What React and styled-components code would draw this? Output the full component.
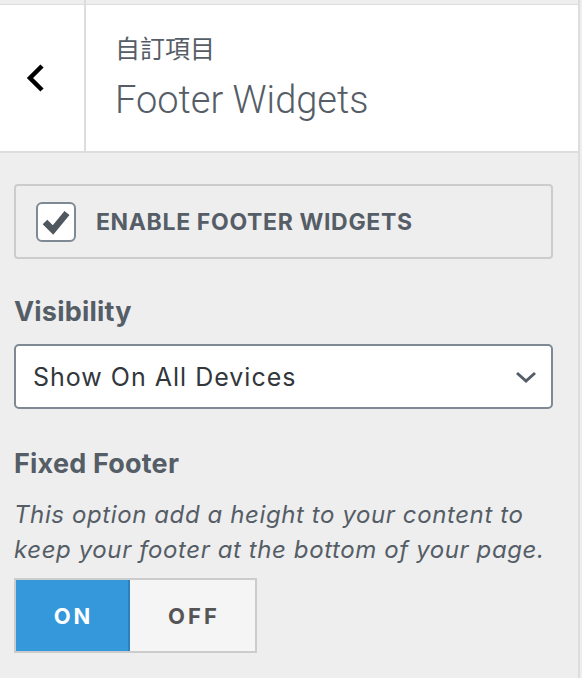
import React, { useState } from "react";
import styled, { createGlobalStyle } from "styled-components";

const GlobalStyle = createGlobalStyle`
  html, body {
    margin: 0;
    padding: 0;
    background: #eeeeee;
  }
  * {
    box-sizing: border-box;
  }
`;

const Sidebar = styled.div`
  width: 580px;
  min-height: 100vh;
  background: #eeeeee;
  border-right: 2px solid #dddddd;
  font-family: Inter, "Noto Sans", sans-serif;
  color: #555d66;
`;

const TopStrip = styled.div`
  height: 5px;
  border-bottom: 1px solid #dddddd;
`;

const TopDivider = styled.div`
  width: 86px;
  height: 100%;
  border-right: 2px solid #dddddd;
`;

const Header = styled.div`
  display: flex;
  height: 148px;
  background: #ffffff;
  border-bottom: 2px solid #dddddd;
`;

const BackButton = styled.button`
  width: 86px;
  display: flex;
  align-items: center;
  padding: 0 0 0 26px;
  margin: 0;
  background: #ffffff;
  border: none;
  border-right: 2px solid #dddddd;
  cursor: pointer;
`;

const TitleBlock = styled.div`
  display: flex;
  flex-direction: column;
  justify-content: center;
  padding-left: 29px;
`;

const Crumb = styled.span`
  font-family: Inter, "Noto Sans CJK TC", sans-serif;
  font-size: 25px;
  line-height: 30px;
  color: #555d66;
`;

const Title = styled.h2`
  margin: 14px 0 0;
  font-family: Roboto, "Liberation Sans", sans-serif;
  font-weight: 300;
  font-size: 38px;
  line-height: 44px;
  color: #555d66;
`;

const Body = styled.div`
  padding: 31px 25px 20px 14px;
`;

const CheckPanel = styled.label`
  display: flex;
  align-items: center;
  gap: 20px;
  height: 75px;
  padding-left: 20px;
  border: 2px solid #cccccc;
  border-radius: 4px;
  cursor: pointer;
`;

const CheckBox = styled.span`
  width: 40px;
  height: 40px;
  display: flex;
  align-items: center;
  justify-content: center;
  background: #ffffff;
  border: 2px solid #7e8993;
  border-radius: 6px;
`;

const CheckLabel = styled.span`
  font-size: 23px;
  font-weight: 700;
  letter-spacing: 0.65px;
  text-transform: uppercase;
  color: #555d66;
`;

const FieldTitle = styled.div`
  margin-top: ${(p) => p.$top}px;
  font-size: 27px;
  font-weight: 700;
  letter-spacing: 0.2px;
  line-height: 34px;
  color: #555d66;
`;

const Select = styled.div`
  margin-top: 15px;
  height: 65px;
  display: flex;
  align-items: center;
  justify-content: space-between;
  padding: 0 14px 0 17px;
  background: #ffffff;
  border: 2px solid #7e8993;
  border-radius: 5px;
  font-size: 25px;
  letter-spacing: 1px;
  color: #32373c;
`;

const Description = styled.p`
  margin: 16px 0 0;
  font-size: 24px;
  font-style: italic;
  letter-spacing: 0.6px;
  line-height: 35px;
  color: #555d66;
`;

const Toggle = styled.div`
  display: inline-flex;
  margin-top: 11px;
  height: 75px;
  border: 2px solid #cccccc;
`;

const ToggleButton = styled.button`
  width: ${(p) => p.$width}px;
  margin: 0;
  padding: 0 0 0 3px;
  border: none;
  border-right: ${(p) => (p.$active ? "2px solid #2c80bd" : "none")};
  background: ${(p) => (p.$active ? "#3498db" : "#f5f5f5")};
  color: ${(p) => (p.$active ? "#ffffff" : "#555555")};
  font-family: Inter, "Noto Sans", sans-serif;
  font-size: 22px;
  font-weight: 700;
  letter-spacing: 3px;
  cursor: pointer;
`;

export default function App() {
  const [enabled, setEnabled] = useState(true);
  const [fixed, setFixed] = useState(true);

  return (
    <Sidebar>
      <GlobalStyle />
      <TopStrip>
        <TopDivider />
      </TopStrip>
      <Header>
        <BackButton aria-label="Back">
          <svg width="20" height="32" viewBox="0 0 20 32">
            <polyline
              points="16,4 4,16 16,28"
              fill="none"
              stroke="#000"
              strokeWidth="4.5"
            />
          </svg>
        </BackButton>
        <TitleBlock>
          <Crumb>自訂項目</Crumb>
          <Title>Footer Widgets</Title>
        </TitleBlock>
      </Header>
      <Body>
        <CheckPanel onClick={() => setEnabled(!enabled)}>
          <CheckBox>
            {enabled && (
              <svg width="28" height="28" viewBox="0 0 28 28">
                <polyline
                  points="3,14 11,22 25,5"
                  fill="none"
                  stroke="#50575e"
                  strokeWidth="6.5"
                />
              </svg>
            )}
          </CheckBox>
          <CheckLabel>Enable Footer Widgets</CheckLabel>
        </CheckPanel>

        <FieldTitle $top={36}>Visibility</FieldTitle>
        <Select>
          <span>Show On All Devices</span>
          <svg width="22" height="12" viewBox="0 0 22 12">
            <polyline
              points="2,2 11,10 20,2"
              fill="none"
              stroke="#555d66"
              strokeWidth="3"
            />
          </svg>
        </Select>

        <FieldTitle $top={38}>Fixed Footer</FieldTitle>
        <Description>
          This option add a height to your content to keep your footer at the
          bottom of your page.
        </Description>
        <Toggle>
          <ToggleButton $width={114} $active={fixed} onClick={() => setFixed(true)}>
            ON
          </ToggleButton>
          <ToggleButton $width={125} $active={!fixed} onClick={() => setFixed(false)}>
            OFF
          </ToggleButton>
        </Toggle>
      </Body>
    </Sidebar>
  );
}
